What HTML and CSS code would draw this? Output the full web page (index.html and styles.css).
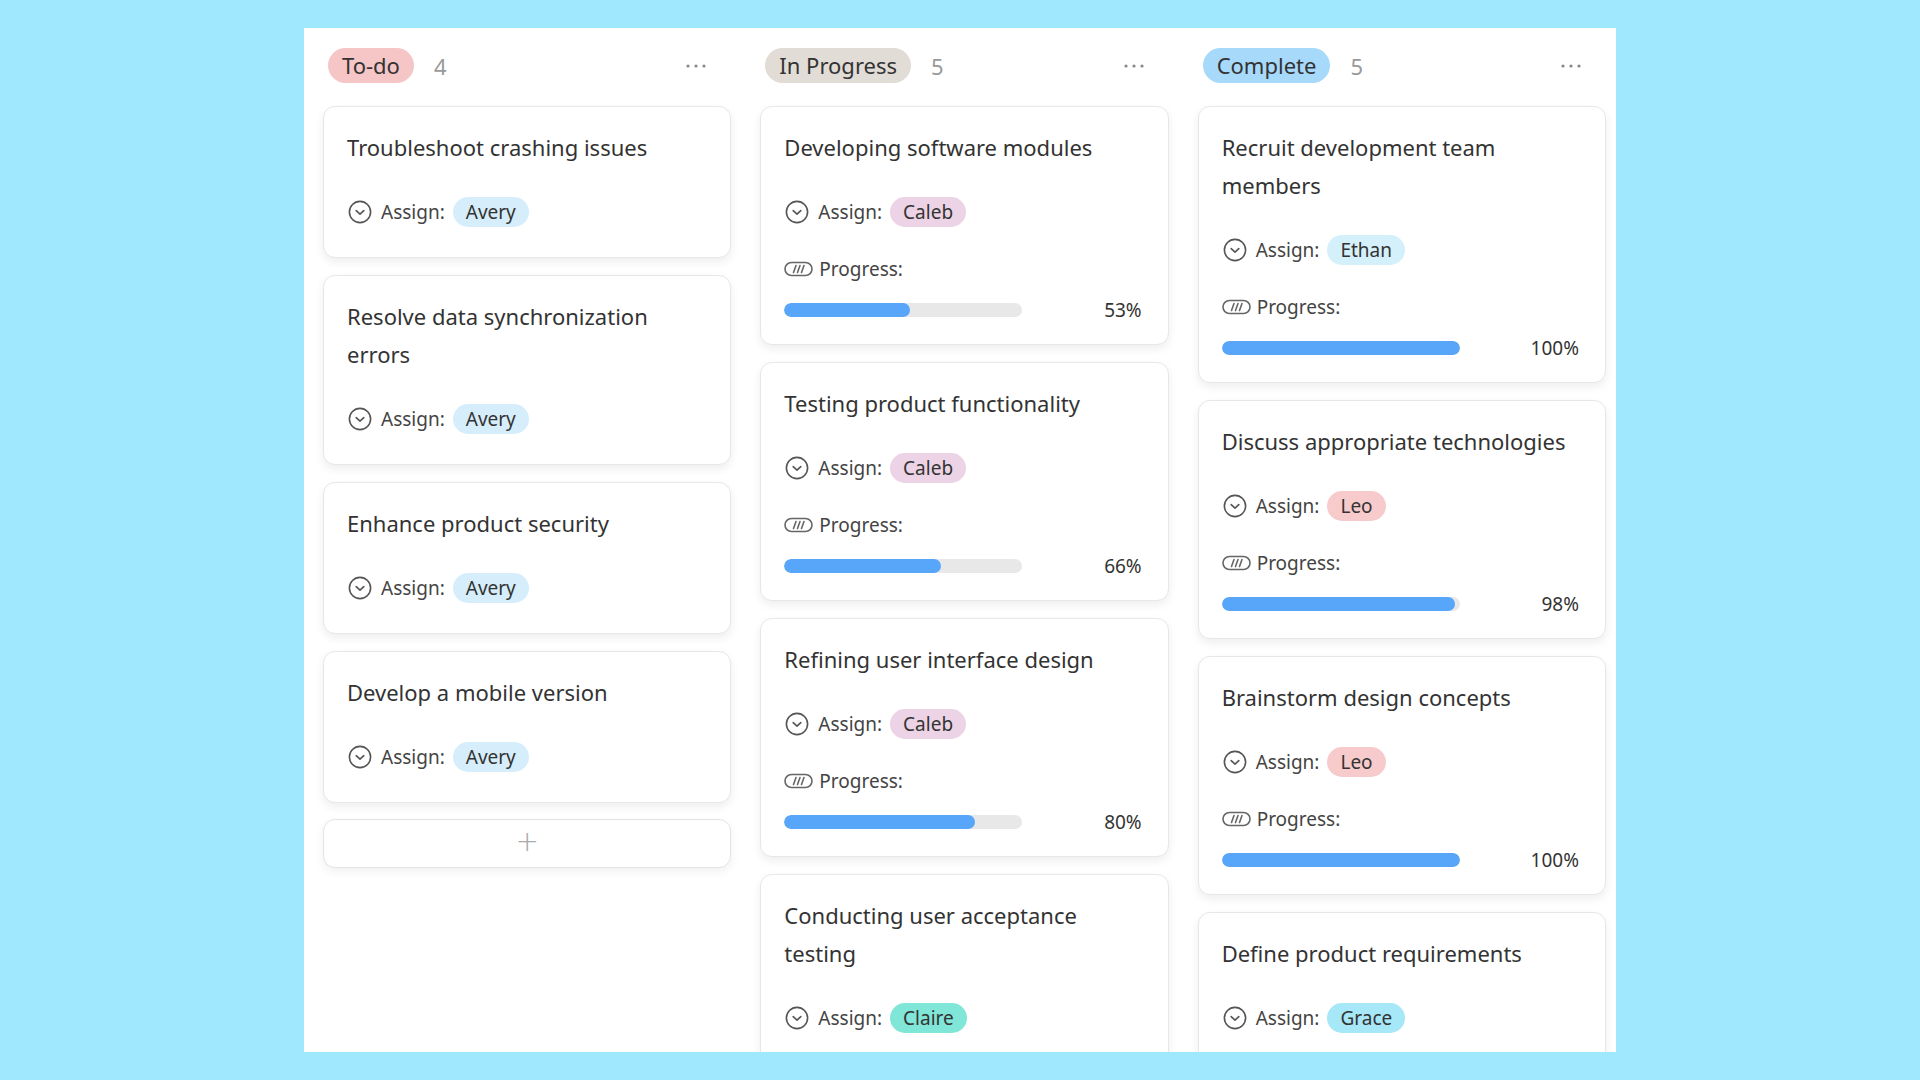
FILE: index.html
```html
<!DOCTYPE html>
<html lang="en">
<head>
<meta charset="utf-8">
<title>Board</title>
<link rel="stylesheet" href="styles.css">
</head>
<body>
<svg width="0" height="0" class="defs">
  <defs>
    <symbol id="i-assign" viewBox="0 0 24 24">
      <circle cx="12" cy="12" r="10.6" fill="none" stroke="#555" stroke-width="1.6"/>
      <path d="M8.2 10.6 L12 14.2 L15.8 10.6" fill="none" stroke="#555" stroke-width="1.6" stroke-linecap="round" stroke-linejoin="round"/>
    </symbol>
    <symbol id="i-progress" viewBox="0 0 29 16">
      <rect x="1" y="1.5" width="27" height="13" rx="6.5" fill="none" stroke="#666" stroke-width="1.6"/>
      <path d="M9.5 11.5 L12 4.5 M13.5 11.5 L16 4.5 M17.5 11.5 L20 4.5" fill="none" stroke="#666" stroke-width="1.6" stroke-linecap="round"/>
    </symbol>
    <symbol id="i-dots" viewBox="0 0 22 6">
      <circle cx="3" cy="3" r="1.6" fill="#888"/>
      <circle cx="11" cy="3" r="1.6" fill="#888"/>
      <circle cx="19" cy="3" r="1.6" fill="#888"/>
    </symbol>
  </defs>
</svg>
<div class="board">
  <section class="column">
    <header class="col-head">
      <span class="pill pill-todo">To-do</span>
      <span class="count">4</span>
      <svg class="dots"><use href="#i-dots"/></svg>
    </header>
    <div class="cards">
      <article class="card">
        <div class="title">Troubleshoot crashing issues</div>
        <div class="row"><svg class="ic-assign"><use href="#i-assign"/></svg><span class="label">Assign:</span><span class="chip c-avery">Avery</span></div>
      </article>
      <article class="card">
        <div class="title">Resolve data synchronization errors</div>
        <div class="row"><svg class="ic-assign"><use href="#i-assign"/></svg><span class="label">Assign:</span><span class="chip c-avery">Avery</span></div>
      </article>
      <article class="card">
        <div class="title">Enhance product security</div>
        <div class="row"><svg class="ic-assign"><use href="#i-assign"/></svg><span class="label">Assign:</span><span class="chip c-avery">Avery</span></div>
      </article>
      <article class="card">
        <div class="title">Develop a mobile version</div>
        <div class="row"><svg class="ic-assign"><use href="#i-assign"/></svg><span class="label">Assign:</span><span class="chip c-avery">Avery</span></div>
      </article>
      <button class="add" type="button">+</button>
    </div>
  </section>

  <section class="column">
    <header class="col-head">
      <span class="pill pill-progress">In Progress</span>
      <span class="count">5</span>
      <svg class="dots"><use href="#i-dots"/></svg>
    </header>
    <div class="cards">
      <article class="card card-prog">
        <div class="title">Developing software modules</div>
        <div class="row"><svg class="ic-assign"><use href="#i-assign"/></svg><span class="label">Assign:</span><span class="chip c-caleb">Caleb</span></div>
        <div class="row row-prog"><svg class="ic-progress"><use href="#i-progress"/></svg><span class="label">Progress:</span></div>
        <div class="bar-row"><div class="track"><div class="fill" style="width:53%"></div></div><span class="pct">53%</span></div>
      </article>
      <article class="card card-prog">
        <div class="title">Testing product functionality</div>
        <div class="row"><svg class="ic-assign"><use href="#i-assign"/></svg><span class="label">Assign:</span><span class="chip c-caleb">Caleb</span></div>
        <div class="row row-prog"><svg class="ic-progress"><use href="#i-progress"/></svg><span class="label">Progress:</span></div>
        <div class="bar-row"><div class="track"><div class="fill" style="width:66%"></div></div><span class="pct">66%</span></div>
      </article>
      <article class="card card-prog">
        <div class="title">Refining user interface design</div>
        <div class="row"><svg class="ic-assign"><use href="#i-assign"/></svg><span class="label">Assign:</span><span class="chip c-caleb">Caleb</span></div>
        <div class="row row-prog"><svg class="ic-progress"><use href="#i-progress"/></svg><span class="label">Progress:</span></div>
        <div class="bar-row"><div class="track"><div class="fill" style="width:80%"></div></div><span class="pct">80%</span></div>
      </article>
      <article class="card">
        <div class="title">Conducting user acceptance testing</div>
        <div class="row"><svg class="ic-assign"><use href="#i-assign"/></svg><span class="label">Assign:</span><span class="chip c-claire">Claire</span></div>
      </article>
    </div>
  </section>

  <section class="column">
    <header class="col-head">
      <span class="pill pill-complete">Complete</span>
      <span class="count">5</span>
      <svg class="dots"><use href="#i-dots"/></svg>
    </header>
    <div class="cards">
      <article class="card card-prog">
        <div class="title">Recruit development team members</div>
        <div class="row"><svg class="ic-assign"><use href="#i-assign"/></svg><span class="label">Assign:</span><span class="chip c-ethan">Ethan</span></div>
        <div class="row row-prog"><svg class="ic-progress"><use href="#i-progress"/></svg><span class="label">Progress:</span></div>
        <div class="bar-row"><div class="track"><div class="fill" style="width:100%"></div></div><span class="pct">100%</span></div>
      </article>
      <article class="card card-prog">
        <div class="title">Discuss appropriate technologies</div>
        <div class="row"><svg class="ic-assign"><use href="#i-assign"/></svg><span class="label">Assign:</span><span class="chip c-leo">Leo</span></div>
        <div class="row row-prog"><svg class="ic-progress"><use href="#i-progress"/></svg><span class="label">Progress:</span></div>
        <div class="bar-row"><div class="track"><div class="fill" style="width:98%"></div></div><span class="pct">98%</span></div>
      </article>
      <article class="card card-prog">
        <div class="title">Brainstorm design concepts</div>
        <div class="row"><svg class="ic-assign"><use href="#i-assign"/></svg><span class="label">Assign:</span><span class="chip c-leo">Leo</span></div>
        <div class="row row-prog"><svg class="ic-progress"><use href="#i-progress"/></svg><span class="label">Progress:</span></div>
        <div class="bar-row"><div class="track"><div class="fill" style="width:100%"></div></div><span class="pct">100%</span></div>
      </article>
      <article class="card">
        <div class="title">Define product requirements</div>
        <div class="row"><svg class="ic-assign"><use href="#i-assign"/></svg><span class="label">Assign:</span><span class="chip c-grace">Grace</span></div>
      </article>
    </div>
  </section>
</div>
</body>
</html>
```

FILE: styles.css
```css
* { box-sizing: border-box; }

html, body {
  margin: 0;
  height: 100%;
}

body {
  background: #a0e8fe;
  padding: 28px 0;
  font-family: "Noto Sans", "Open Sans", sans-serif;
  color: #333;
}

.defs {
  position: absolute;
  width: 0;
  height: 0;
}

.board {
  width: 1312px;
  height: 1024px;
  margin: 0 auto;
  background: #fff;
  overflow: hidden;
  display: grid;
  grid-template-columns: repeat(3, 1fr);
}

.column {
  padding: 20px 10px 0 19px;
  min-width: 0;
}

.col-head {
  display: flex;
  align-items: center;
  height: 35px;
  padding: 0 24px 0 5px;
  margin-bottom: 23px;
}

.pill {
  height: 35px;
  line-height: 35px;
  padding: 0 14px;
  border-radius: 18px;
  font-size: 22px;
  color: #333;
}

.pill-todo { background: #f6c6c6; }
.pill-progress { background: #e2dcd6; }
.pill-complete { background: #a7d9fb; }

.count {
  margin-left: 20px;
  font-size: 22px;
  color: #999;
}

.dots {
  margin-left: auto;
  width: 22px;
  height: 6px;
}

.cards {
  display: flex;
  flex-direction: column;
  gap: 17px;
}

.card {
  background: #fff;
  border: 1px solid #e7e7e7;
  border-radius: 12px;
  box-shadow: 0 4px 10px rgba(0, 0, 0, 0.07);
  padding: 21px 26px 30px 23px;
}

.card-prog {
  padding-bottom: 27px;
}

.title {
  font-size: 22px;
  line-height: 38px;
  color: #333;
}

.row {
  display: flex;
  align-items: center;
  height: 30px;
  margin-top: 31px;
}

.row-prog {
  margin-top: 27px;
}

.ic-assign {
  width: 24px;
  height: 24px;
  margin-left: 1px;
  margin-right: 9px;
  flex: none;
}

.ic-progress {
  width: 29px;
  height: 16px;
  margin-right: 6px;
  flex: none;
}

.label {
  font-size: 19px;
  color: #444;
}

.chip {
  margin-left: 8px;
  height: 30px;
  line-height: 30px;
  padding: 0 13px;
  border-radius: 15px;
  font-size: 19px;
  color: #333;
}

.c-avery { background: #d6eefb; }
.c-caleb { background: #ecd3e5; }
.c-claire { background: #80e6d7; }
.c-ethan { background: #d3f0fb; }
.c-leo { background: #f7cbcb; }
.c-grace { background: #a6e7f8; }

.bar-row {
  display: flex;
  align-items: center;
  height: 14px;
  margin-top: 19px;
}

.track {
  width: 238px;
  height: 14px;
  border-radius: 7px;
  background: #e8e8e8;
  overflow: hidden;
  flex: none;
}

.fill {
  height: 100%;
  border-radius: 7px;
  background: #58a6fa;
}

.pct {
  flex: 1;
  text-align: right;
  font-size: 19px;
  line-height: 14px;
  color: #333;
}

.add {
  display: flex;
  align-items: center;
  justify-content: center;
  height: 49px;
  width: 100%;
  padding: 0 0 4px;
  margin-top: -1px;
  background: #fff;
  border: 1px solid #e4e4e4;
  border-radius: 12px;
  box-shadow: 0 4px 10px rgba(0, 0, 0, 0.06);
  font-family: "DejaVu Sans", sans-serif;
  font-size: 28px;
  font-weight: 300;
  color: #aaa;
  cursor: pointer;
}
```
